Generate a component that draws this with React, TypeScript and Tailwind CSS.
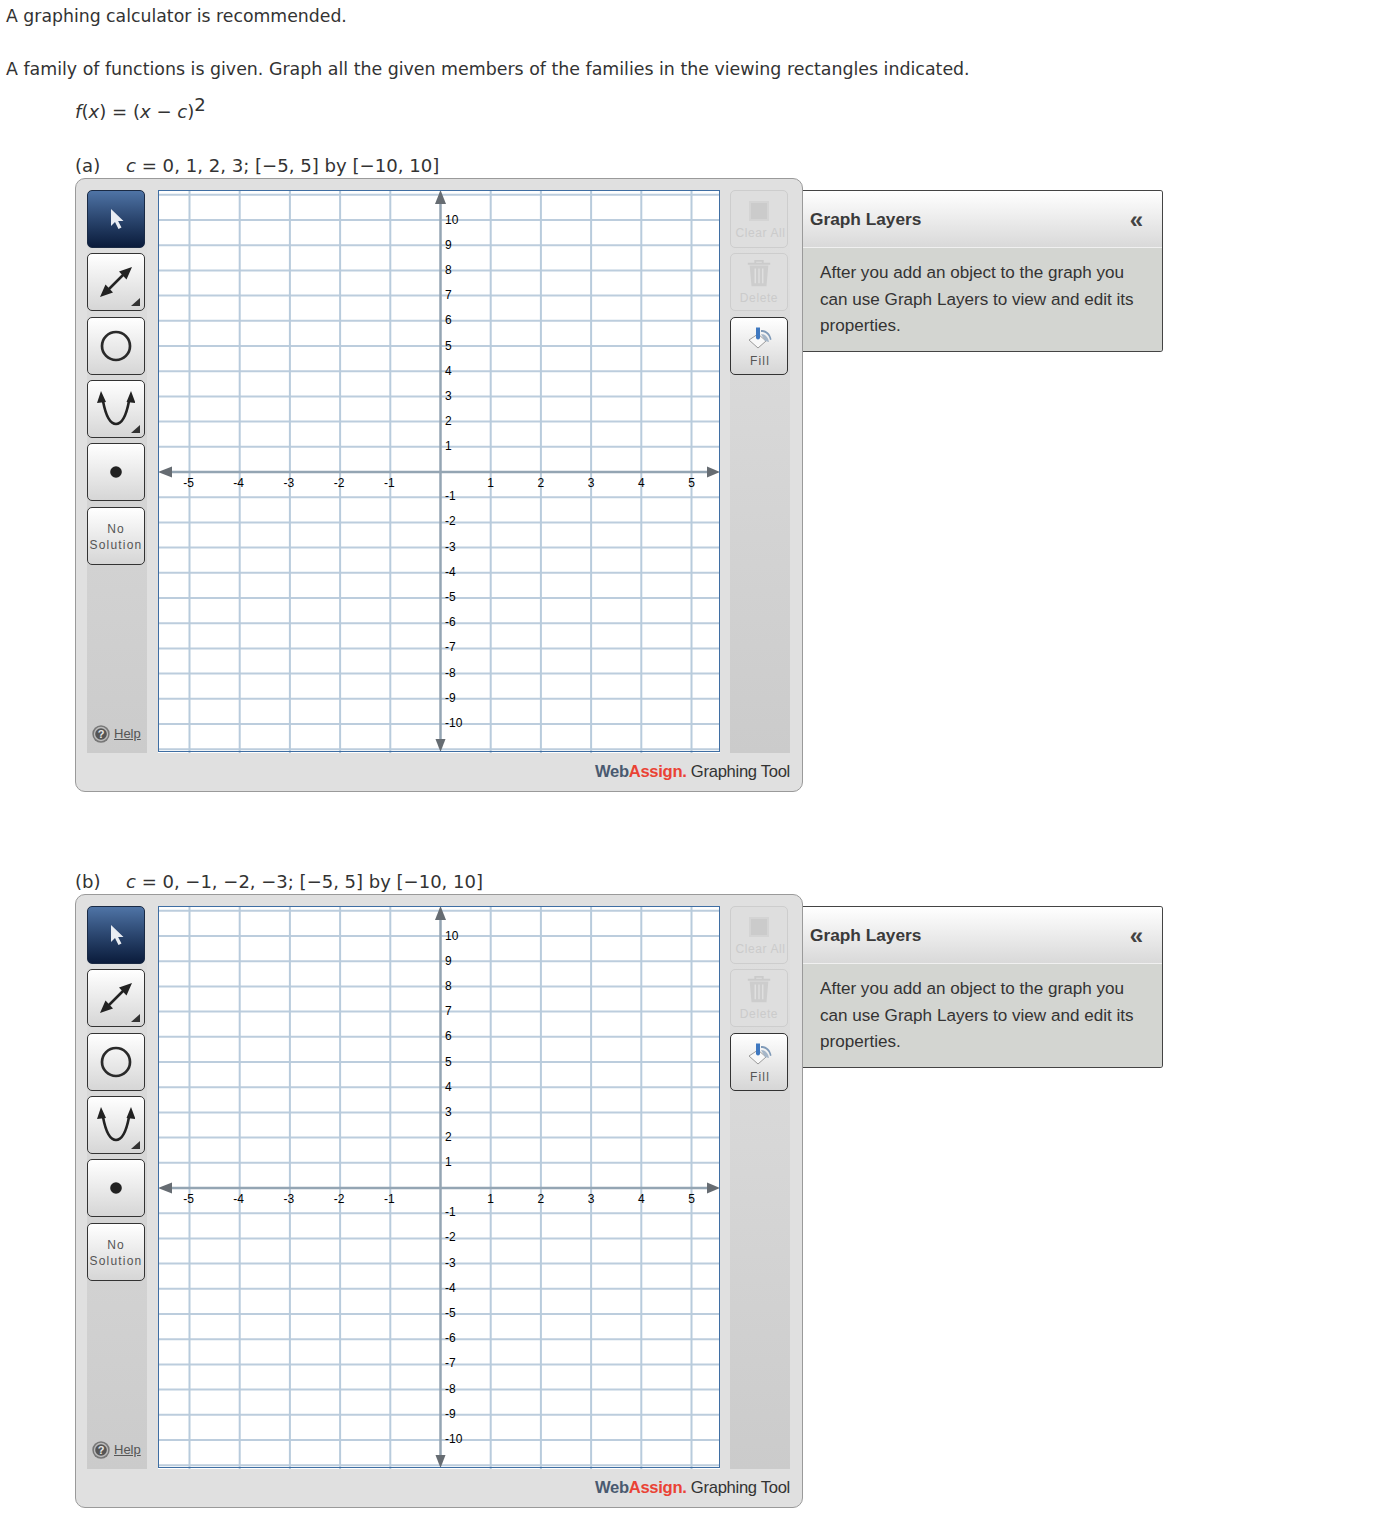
import React from 'react';

const xTicks = [-5, -4, -3, -2, -1, 1, 2, 3, 4, 5];
const yTicks = [10, 9, 8, 7, 6, 5, 4, 3, 2, 1, -1, -2, -3, -4, -5, -6, -7, -8, -9, -10];

const Plot = () => {
    const ox = 282.5;
    const oy = 282;
    const sx = 50.2;
    const sy = 25.2;
    return (
        <svg width="562" height="563" className="block bg-white shrink-0">
            {[-11, ...yTicks, 11].map((n) => (
                <line key={n} x1="0" x2="562" y1={oy - n * sy} y2={oy - n * sy} stroke="#bccddd" strokeWidth="2" />
            ))}
            {xTicks.map((n) => (
                <line key={n} x1={ox + n * sx} x2={ox + n * sx} y1="0" y2="563" stroke="#b8cbdc" strokeWidth="2" />
            ))}
            <line x1={ox} x2={ox} y1="6" y2="556" stroke="#94a5b3" strokeWidth="2.5" />
            <line x1="6" x2="556" y1={oy} y2={oy} stroke="#94a5b3" strokeWidth="2.5" />
            <path d="M282.5 0l-5.5 14h11z" fill="#666c72" />
            <path d="M282.5 562l-5 -13h10z" fill="#666c72" />
            <path d="M0 282l14 -5.5v11z" fill="#666c72" />
            <path d="M562 282l-13 -5.5v11z" fill="#666c72" />
            <rect x="0.5" y="0.5" width="561" height="561" fill="none" stroke="#3f6ea3" />
            {xTicks.map((n) => (
                <text key={n} x={ox + n * sx - (n < 0 ? 1 : 0)} y="297" textAnchor="middle" fontSize="12" fill="#000" fontFamily="Liberation Sans">{n}</text>
            ))}
            {yTicks.map((n) => (
                <text key={n} x="287" y={oy - n * sy + (n > 0 ? 3.5 : 3)} fontSize="12" fill="#000" fontFamily="Liberation Sans">{n}</text>
            ))}
        </svg>
    );
};

const Tool = ({ children, active, disabled, corner, start }: { children: React.ReactNode; active?: boolean; disabled?: boolean; corner?: boolean; start?: boolean }) => (
    <div
        className={
            'relative w-[58px] h-[58px] rounded-[5px] border flex flex-col items-center ' +
            (start ? 'justify-start ' : 'justify-center ') +
            (active
                ? 'border-[#1a2a44] bg-gradient-to-b from-[#4f74a6] to-[#0b1c3c]'
                : disabled
                  ? 'border-[#cdcdcd] bg-[#dedede]'
                  : 'border-[#333333] bg-gradient-to-b from-[#ffffff] to-[#d6d6d6]')
        }
    >
        {children}
        {corner && (
            <svg width="9" height="9" className="absolute right-[4px] bottom-[4px]">
                <path d="M9 1v8H0z" fill="#333" />
            </svg>
        )}
    </div>
);

const ToolLabel = ({ children, muted }: { children: React.ReactNode; muted?: boolean }) => (
    <div className={'font-["Liberation_Sans",sans-serif] text-[12px] leading-[16px] text-center whitespace-nowrap ' + (muted ? 'tracking-[0.6px] text-[#cbcbcb]' : 'tracking-[1.2px] text-[#555555]')}>
        {children}
    </div>
);

const LeftTools = () => (
    <div className="w-[60px] h-[563px] flex flex-col bg-gradient-to-b from-[#e0e0e0] to-[#cbcbcb] shrink-0">
        <div className="flex flex-col gap-[5px] w-[58px]">
            <Tool active>
                <svg width="16" height="24" viewBox="0 0 16 24">
                    <path d="M3 2v17l4 -4 3.5 7 3 -1.5 -3.4 -6.5h5.4z" fill="#e9edf3" />
                </svg>
            </Tool>
            <Tool corner>
                <svg width="36" height="36" viewBox="0 0 36 36">
                    <path d="M8 28L28 8" stroke="#222" strokeWidth="2.5" />
                    <path d="M34 3l-13 4.500 7.500 8zM2 33l13 -4.500 -7.500 -8z" fill="#222" />
                </svg>
            </Tool>
            <div className="mt-[1px]">
                <Tool>
                    <svg width="34" height="34" viewBox="0 0 34 34" className="-ml-[1px]">
                        <circle cx="17" cy="17" r="14" fill="none" stroke="#2a2a2a" strokeWidth="2.7" />
                    </svg>
                </Tool>
            </div>
            <Tool corner>
                <svg width="38" height="40" viewBox="0 0 38 40">
                    <path d="M6 12C9 28 13 35 19 35S29 28 32 12" fill="none" stroke="#222" strokeWidth="2.6" />
                    <path d="M4 2l-4 12 9 -1zM34 2l-4.500 11 9 1z" fill="#222" />
                </svg>
            </Tool>
            <Tool>
                <svg width="12" height="12" viewBox="0 0 12 12" className="-ml-[1px]">
                    <circle cx="6" cy="6" r="5.800" fill="#222" />
                </svg>
            </Tool>
            <div className="mt-[1px]">
                <Tool>
                    <div className="pt-[2px]">
                        <ToolLabel>No</ToolLabel>
                        <ToolLabel>Solution</ToolLabel>
                    </div>
                </Tool>
            </div>
        </div>
        <div className="mt-auto mb-[10px] ml-[5px] flex items-center gap-[4px]">
            <svg width="18" height="18" viewBox="0 0 18 18">
                <circle cx="9" cy="9" r="8.700" fill="#777777" />
                <circle cx="9" cy="9" r="7.200" fill="#bdbdbd" />
                <circle cx="9" cy="9" r="5.800" fill="#555555" />
                <text x="9" y="13" textAnchor="middle" fontSize="11" fontWeight="700" fill="#e8e8e8" fontFamily="Liberation Sans">?</text>
            </svg>
            <span className='font-["Liberation_Sans",sans-serif] text-[13px] leading-[16px] text-[#555555] underline'>Help</span>
        </div>
    </div>
);

const RightTools = () => (
    <div className="w-[60px] h-[563px] flex flex-col gap-[5px] bg-gradient-to-b from-[#e0e0e0] to-[#cbcbcb] shrink-0">
        <Tool disabled start>
            <svg width="20" height="20" viewBox="0 0 20 20" className="mt-[10px] mb-[4px]">
                <rect x="1" y="1" width="18" height="18" fill="#cbcbcb" stroke="#d4d4d4" strokeWidth="2" />
            </svg>
            <div className="ml-[3px]">
                <ToolLabel muted>Clear All</ToolLabel>
            </div>
        </Tool>
        <Tool disabled start>
            <svg width="24" height="28" viewBox="0 0 24 30" className="mt-[6px] mb-[2px]">
                <path d="M0 4h24M8 4V1h8v3" stroke="#cbcbcb" strokeWidth="2" fill="none" />
                <path d="M2 6h20l-2 22H4z" fill="#cdcdcd" />
                <path d="M8 9v16M12 9v16M16 9v16" stroke="#e0e0e0" strokeWidth="1.500" />
            </svg>
            <ToolLabel muted>Delete</ToolLabel>
        </Tool>
        <div className="mt-[1px]">
            <Tool start>
                <svg width="24" height="22" viewBox="0 0 24 22" className="mt-[9px] mb-[4px] ml-[1px]">
                    <path d="M1 13l9 -6 8 7 -8 7z" fill="#f8f8f8" stroke="#9a9a9a" />
                    <path d="M8 0.500h4v10a2 2 0 0 1 -4 0z" fill="#3f78c0" />
                    <path d="M13 5c5 0 8 3 9 8l1.500 -0.500c-1 -6 -5 -9.500 -10.500 -9.500z" fill="#7f9ab8" />
                    <path d="M13 7c4 0 7 3 8 8l-4 -1z" fill="#a5b6c8" />
                </svg>
                <div className="ml-[2px]">
                    <ToolLabel>Fill</ToolLabel>
                </div>
            </Tool>
        </div>
    </div>
);

const GraphLayers = () => (
    <div className='mt-[12px] w-[360px] border border-l-0 border-[#444444] rounded-r-[3px] font-["Liberation_Sans",sans-serif] overflow-hidden'>
        <div className="h-[57px] px-[7px] pt-[1px] flex items-center justify-between bg-gradient-to-b from-[#ffffff] to-[#d9d9d9] border-b border-[#f0f0f0]">
            <span className="text-[17.300px] font-bold text-[#3a3a3a]">Graph Layers</span>
            <span className="text-[24px] font-bold text-[#444444] leading-none mr-[12px]">«</span>
        </div>
        <div className="h-[103px] pl-[17px] pr-[20px] pt-[12px] bg-[#d3d5d1] text-[17.100px] leading-[26.500px] text-[#333333]">
            After you add an object to the graph you can use Graph Layers to view and edit its properties.
        </div>
    </div>
);

const GraphTool = () => (
    <div className="flex items-start">
        <div className="w-[728px] h-[614px] border border-[#9a9a9a] rounded-[10px] bg-[#e0e0e0] pt-[11px] pl-[11px] shrink-0">
            <div className="flex">
                <LeftTools />
                <div className="ml-[11px]">
                    <Plot />
                </div>
                <div className="ml-[10px]">
                    <RightTools />
                </div>
            </div>
            <div className='w-[703px] mt-[7px] text-right font-["Liberation_Sans",sans-serif] text-[16.600px] leading-[24px] tracking-[-0.300px] text-[#333333]'>
                <span className="font-bold text-[#4a5a70]">Web</span>
                <span className="font-bold text-[#ea4335]">Assign.</span> Graphing Tool
            </div>
        </div>
        <GraphLayers />
    </div>
);

const App = () => (
    <div className='w-[1376px] h-[1520px] bg-white font-["DejaVu_Sans",sans-serif] text-[#333333] text-[17.400px] overflow-hidden'>
        <p className="pl-[6px] pt-[4px] leading-[24px] text-[17.300px]">A graphing calculator is recommended.</p>
        <p className="pl-[6px] mt-[29px] leading-[24px]">A family of functions is given. Graph all the given members of the families in the viewing rectangles indicated.</p>
        <div className="pl-[75px] text-[18.100px]">
            <p className="mt-[13px] h-[36px] leading-[36px]">
                <i>f</i>(<i>x</i>) = (<i>x</i> − <i>c</i>)<sup className="text-[18.100px] -top-[7px]">2</sup>
            </p>
            <p className="mt-[24px] h-[24px] leading-[24px] flex">
                <span className="w-[51px]">(a)</span>
                <span><i>c</i> = 0, 1, 2, 3; [−5, 5] by [−10, 10]</span>
            </p>
            <GraphTool />
            <p className="mt-[78px] h-[24px] leading-[24px] flex">
                <span className="w-[51px]">(b)</span>
                <span className="text-[18px]"><i>c</i> = 0, −1, −2, −3; [−5, 5] by [−10, 10]</span>
            </p>
            <GraphTool />
        </div>
    </div>
);

export default App;
